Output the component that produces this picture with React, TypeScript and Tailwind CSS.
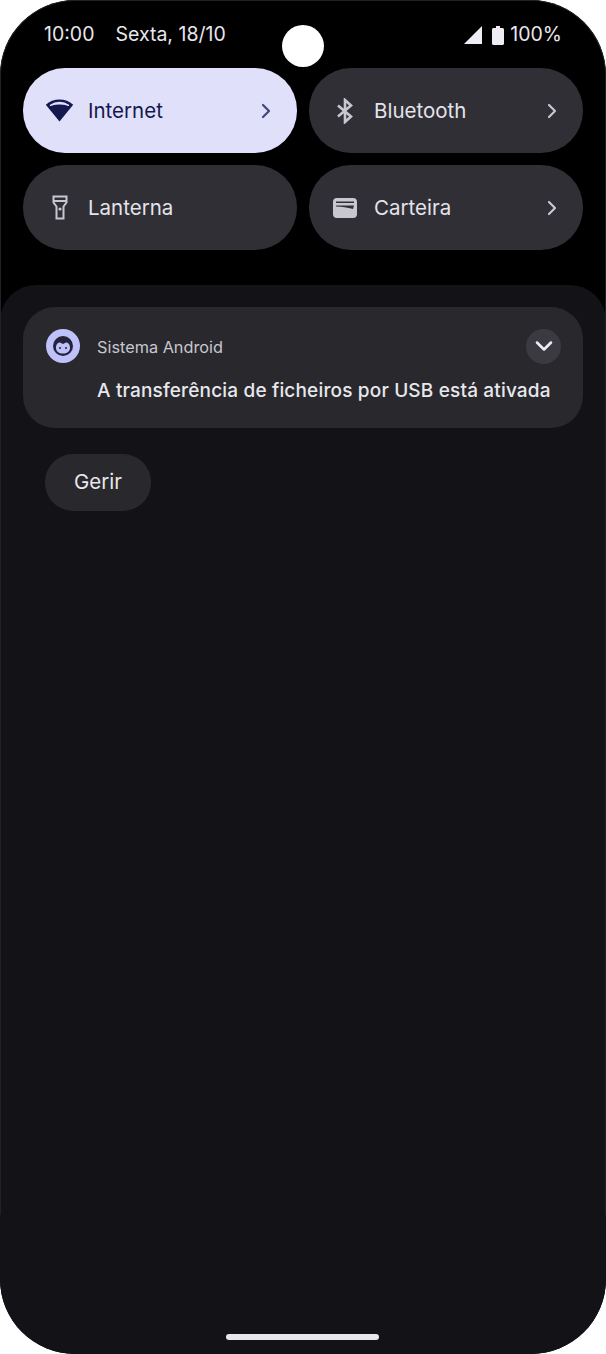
import { ChevronRight, ChevronDown } from "lucide-react";

function WifiIcon() {
  return (
    <svg width="29" height="24" viewBox="0 0 29 24" className="shrink-0 -translate-x-px">
      <path d="M14.5 .5C9.5 .5 4.4 2.4 .8 5.8L14.5 22.5 28.2 5.8C24.6 2.4 19.5 .5 14.5 .5Z" fill="#14184f" />
      <path d="M5.5 6.4C8.2 4.4 11.2 3.4 14.5 3.4S20.8 4.4 23.5 6.4C21 5.4 18 4.9 14.5 4.9S8 5.4 5.5 6.4Z" fill="#e0e0fb" stroke="#e0e0fb" strokeWidth="1.4" strokeLinejoin="round" />
    </svg>
  );
}

function BluetoothIcon() {
  return (
    <svg width="20" height="26" viewBox="0 0 20 26" className="shrink-0 -translate-x-px" fill="none" stroke="#c8c7d0" strokeWidth="2.6">
      <path d="M3 7.5 16 18.5 10 24V2L16 7.5 3 18.5" />
    </svg>
  );
}

function FlashlightIcon() {
  return (
    <svg width="16" height="25" viewBox="0 0 16 25" className="shrink-0" fill="none" stroke="#c8c7d0" strokeWidth="2">
      <path d="M1.5 1.5H14.5V7.5L11.5 11.5V23.5H4.5V11.5L1.5 7.5Z" />
      <path d="M1.5 6H14.5" />
      <circle cx="8" cy="14" r="1.6" fill="#c8c7d0" stroke="none" />
    </svg>
  );
}

function WalletIcon() {
  return (
    <svg width="24" height="20" viewBox="0 0 24 20" className="shrink-0 -translate-x-px">
      <rect width="24" height="20" rx="4" fill="#c8c7d0" />
      <path d="M3 3.5H21V5H3Z" fill="#302f35" />
      <path d="M3 7.5H21L20 11C14 9.3 9 8.4 3 8.4Z" fill="#302f35" />
    </svg>
  );
}

function AppIcon() {
  return (
    <div className="w-[34px] h-[34px] rounded-full bg-[#bfc1fb] flex items-center justify-center shrink-0">
      <svg width="22" height="22" viewBox="0 0 22 22">
        <circle cx="11" cy="11" r="10" fill="#23233a" />
        <path d="M4 13C4 9 6 7.5 8 7.5L11 9 14 7.5C16 7.5 18 9 18 13 18 16.5 15 18.5 11 18.5S4 16.5 4 13Z" fill="#bfc1fb" />
        <circle cx="8" cy="13" r="1" fill="#23233a" />
        <circle cx="14" cy="13" r="1" fill="#23233a" />
      </svg>
    </div>
  );
}

function Tile({ icon, label, active, chevron = true }: { icon: React.ReactNode; label: string; active?: boolean; chevron?: boolean }) {
  return (
    <div className={`h-[85px] rounded-[42px] flex items-center ${active ? "bg-[#e0e0fb]" : "bg-[#302f35]"}`}>
      <div className="w-[65px] pl-[9px] flex items-center justify-center shrink-0">{icon}</div>
      <span className={`text-[20.5px] pt-[2px] flex-1 ${active ? "text-[#14184f]" : "text-[#e4e3ea]"}`}>{label}</span>
      {chevron && (
        <ChevronRight size={24} strokeWidth={2.2} className={`mr-[19px] ${active ? "text-[#43467a]" : "text-[#c8c7d0]"}`} />
      )}
    </div>
  );
}

export default function App() {
  return (
    <div className="w-[606px] h-[1354px] bg-white" style={{ fontFamily: "Inter, sans-serif" }}>
      <div className="relative w-full h-full rounded-[75px] overflow-hidden bg-black flex flex-col">
        {/* camera cutout */}
        <div className="absolute left-[282px] top-[25px] w-[42px] h-[42px] rounded-full bg-white" />
        {/* faint bezel line, stops above the bottom corners */}
        <div className="absolute left-0 right-0 top-0 h-[1215px] rounded-t-[75px] border border-b-0 border-[#222226] pointer-events-none z-10" />

        {/* status bar */}
        <div className="h-[68px] pl-[44px] pr-[44px] pt-[2px] flex items-center justify-between text-[19.5px] text-[#e8e7ee] shrink-0">
          <div className="flex gap-[21px]">
            <span>10:00</span>
            <span>Sexta, 18/10</span>
          </div>
          <div className="flex items-center">
            <svg width="18" height="18" viewBox="0 0 18 18" className="mr-[10px]">
              <path d="M18 0V18H0Z" fill="#eeedf5" />
            </svg>
            <svg width="12" height="19" viewBox="0 0 12 19" className="mr-[6px]">
              <path d="M4 0H8V2H10.5C11.3 2 12 2.7 12 3.5V17.5C12 18.3 11.3 19 10.5 19H1.5C.7 19 0 18.3 0 17.5V3.5C0 2.7.7 2 1.5 2H4Z" fill="#eeedf5" />
            </svg>
            <span>100%</span>
          </div>
        </div>

        {/* quick settings */}
        <div className="px-[23px] grid grid-cols-2 gap-x-3 gap-y-3 shrink-0">
          <Tile icon={<WifiIcon />} label="Internet" active />
          <Tile icon={<BluetoothIcon />} label="Bluetooth" />
          <Tile icon={<FlashlightIcon />} label="Lanterna" chevron={false} />
          <Tile icon={<WalletIcon />} label="Carteira" />
        </div>

        {/* notification shade */}
        <div className="mt-[35px] flex-1 rounded-t-[36px] bg-[#131317] px-[23px] pt-[22px] flex flex-col">
          <div className="h-[121px] rounded-[32px] bg-[#29292d] pl-[23px] pr-[22px] pt-[22px]">
            <div className="flex items-center h-[34px]">
              <AppIcon />
              <span className="ml-[17px] pt-[2px] flex-1 text-[16.3px] text-[#c8c7d0]">Sistema Android</span>
              <div className="w-[35px] h-[35px] rounded-full bg-[#3a3a40] flex items-center justify-center">
                <ChevronDown size={28} strokeWidth={2.2} className="text-[#eeedf5]" />
              </div>
            </div>
            <p className="ml-[51px] mt-[16px] text-[19px] font-medium tracking-[0.17px] leading-[24px] text-[#e8e7ee] whitespace-nowrap">
              A transferência de ficheiros por USB está ativada
            </p>
          </div>
          <div className="mt-[26px] ml-[22px] w-[106px] h-[57px] pb-px rounded-[28px] bg-[#29292d] flex items-center justify-center text-[20.5px] text-[#e8e7ee]">
            Gerir
          </div>
          <div className="mt-auto mb-[14px] ml-[203px] w-[153px] h-[6px] rounded-full bg-[#e8e8ea]" />
        </div>
      </div>
    </div>
  );
}
